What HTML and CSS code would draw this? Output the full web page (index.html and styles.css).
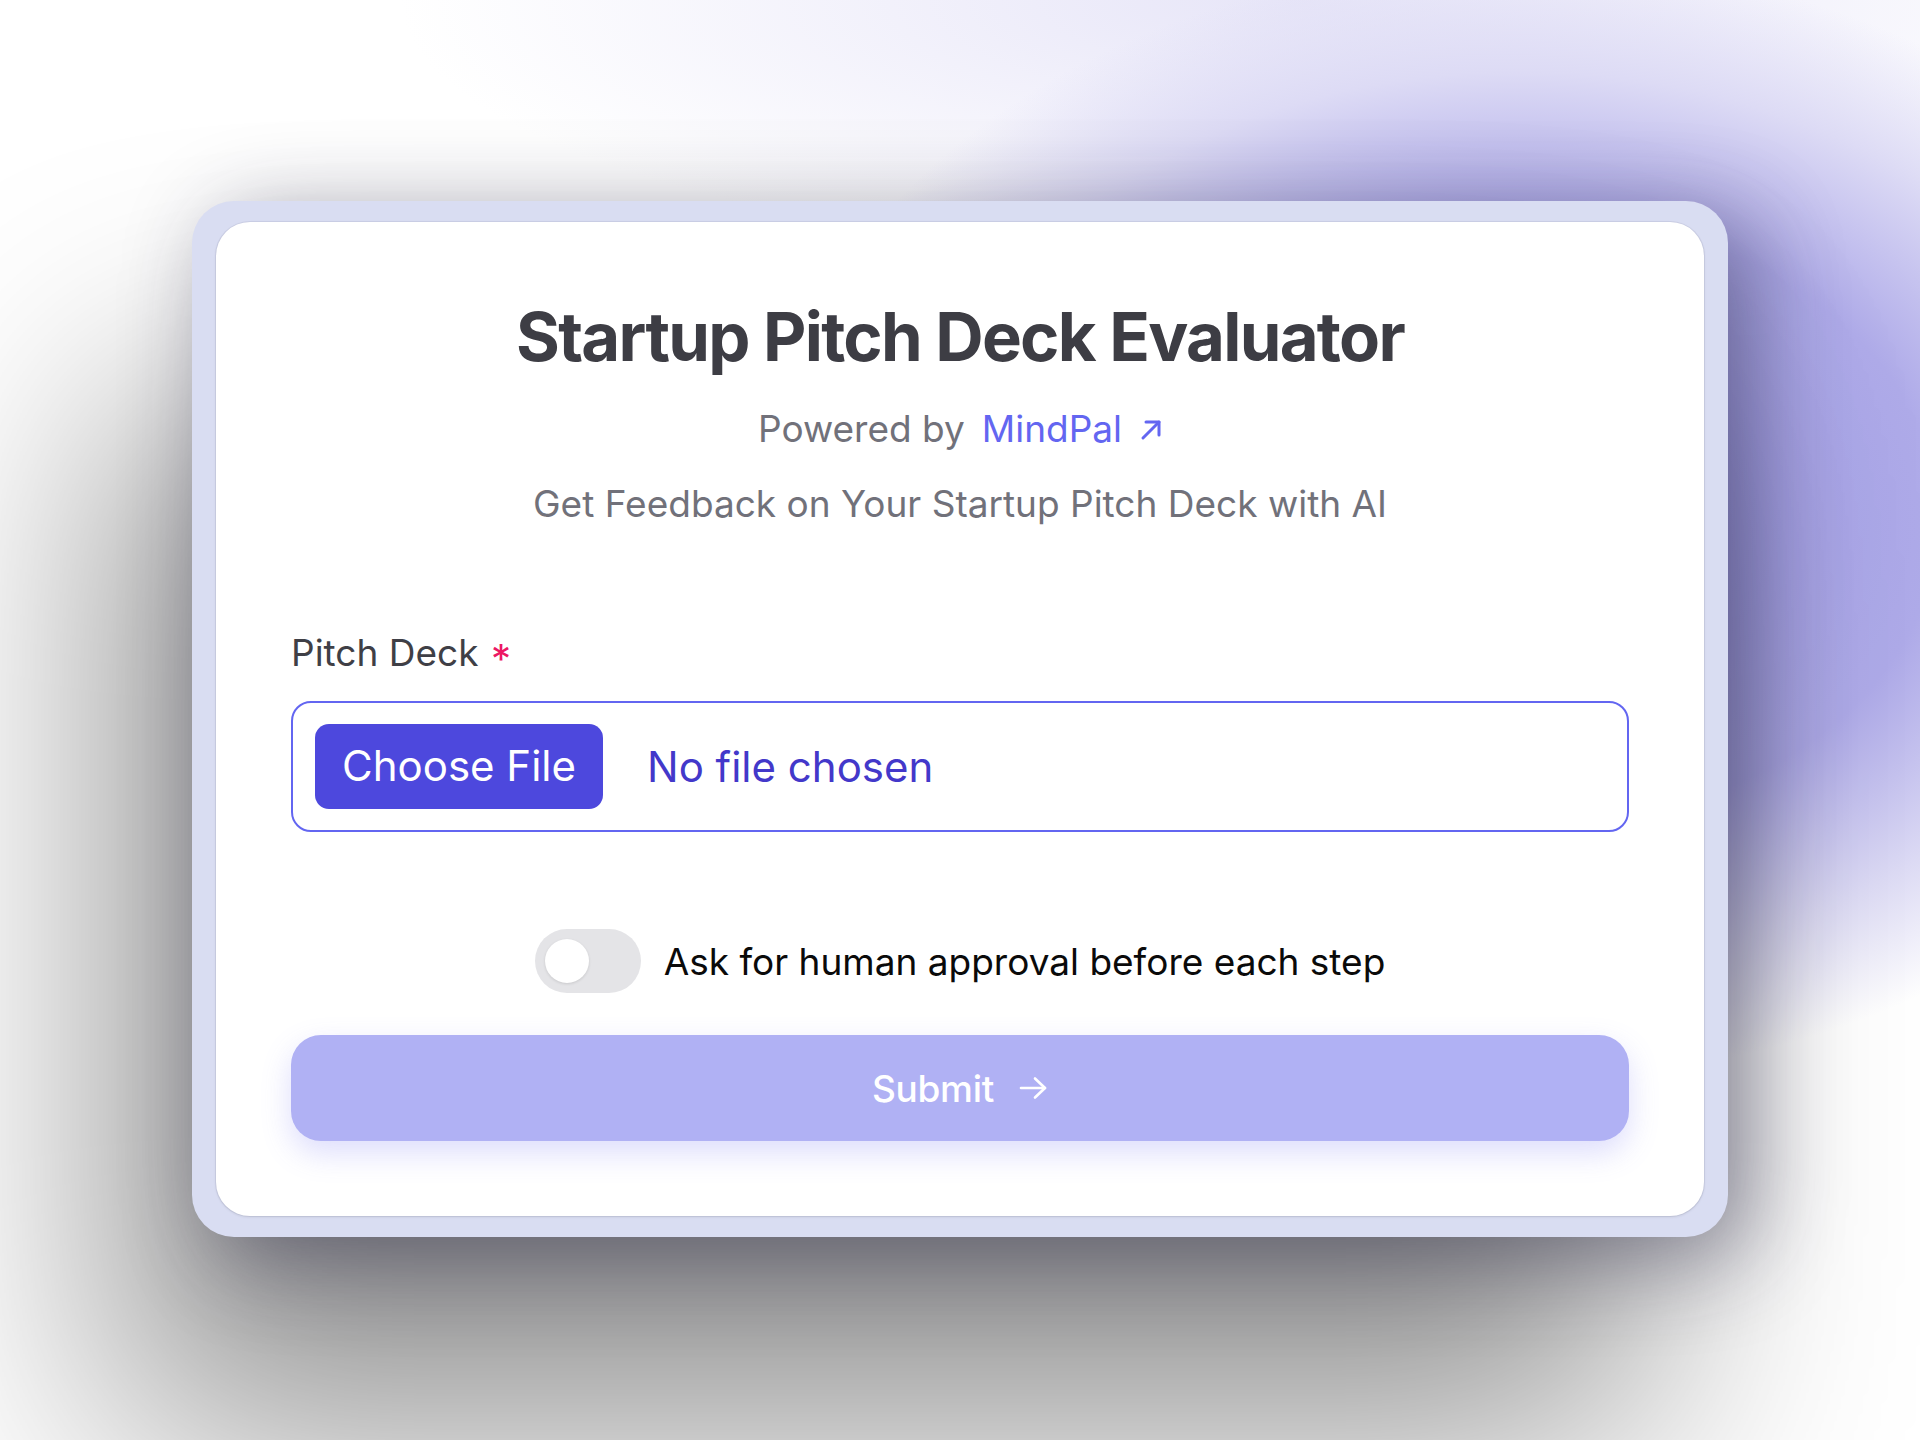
FILE: index.html
```html
<!DOCTYPE html>
<html lang="en">
<head>
<meta charset="utf-8">
<title>Startup Pitch Deck Evaluator</title>
<link rel="stylesheet" href="styles.css">
</head>
<body>
<main class="stage">
  <div class="frame">
    <section class="card">
      <header class="head">
        <h1 class="title">Startup Pitch Deck Evaluator</h1>
        <p class="powered">Powered by <a class="brand" href="#">MindPal<svg class="brand-icon" width="22" height="22" viewBox="0 0 22 22" fill="none" stroke="currentColor" stroke-width="3" stroke-linecap="round" stroke-linejoin="round"><path d="M3 19 19 3"/><path d="M6 3h13v13"/></svg></a></p>
        <p class="subtitle">Get Feedback on Your Startup Pitch Deck with AI</p>
      </header>
      <form class="form">
        <div class="field">
          <label class="label">Pitch Deck <span class="req">*</span></label>
          <div class="file">
            <span class="file-btn">Choose File</span>
            <span class="file-name">No file chosen</span>
          </div>
        </div>
        <div class="toggle-row">
          <span class="switch"><span class="knob"></span></span>
          <span class="toggle-label">Ask for human approval before each step</span>
        </div>
        <button class="submit" type="button">Submit<svg class="submit-icon" width="30" height="24" viewBox="0 0 30 24" fill="none" stroke="currentColor" stroke-width="2.6" stroke-linecap="round" stroke-linejoin="round"><path d="M3 12h24"/><path d="M17 2.5 27 12 17 21.5"/></svg></button>
      </form>
    </section>
  </div>
</main>
</body>
</html>
```
FILE: styles.css
```css
* { box-sizing: border-box; }

html, body {
  margin: 0;
  padding: 0;
}

body {
  width: 1920px;
  height: 1440px;
  overflow: hidden;
  font-family: Inter, "Noto Sans", "Liberation Sans", sans-serif;
  background:
    radial-gradient(ellipse 760px 560px at 1520px 520px, #9c98e6 0%, #afabe9 55%, #dddbf5 80%, rgba(255,255,255,0) 100%),
    radial-gradient(ellipse 900px 260px at 1300px 0px, rgba(225,223,246,0.8) 0%, rgba(255,255,255,0) 100%),
    #ffffff;
}

.stage {
  padding-top: 201px;
  display: flex;
  justify-content: center;
}

.frame {
  width: 1536px;
  padding: 21px 24px;
  background: #d9ddf2;
  border-radius: 42px;
  box-shadow:
    24px 20px 90px rgba(30, 28, 60, 0.45),
    -80px 200px 260px rgba(0, 0, 0, 0.43);
}

.card {
  background: #ffffff;
  border-radius: 34px;
  padding: 75px 75px;
  box-shadow: 0 0 0 1px rgba(40, 40, 80, 0.07), 0 1px 3px rgba(0, 0, 0, 0.1);
}

.head {
  display: flex;
  flex-direction: column;
  align-items: center;
  text-align: center;
}

.title {
  margin: 0;
  font-size: 67px;
  line-height: 80px;
  font-weight: 700;
  color: #3d3d44;
  letter-spacing: -1.7px;
}

.powered {
  margin: 29px 0 0;
  font-size: 37px;
  line-height: 46px;
  color: #71717a;
  display: flex;
  align-items: center;
}

.brand {
  margin-left: 17px;
  color: #6366f1;
  text-decoration: none;
  display: inline-flex;
  align-items: center;
}

.brand-icon {
  margin-left: 18px;
  margin-top: 2px;
}

.subtitle {
  margin: 29px 0 0;
  font-size: 37px;
  line-height: 45px;
  color: #71717a;
}

.form {
  display: flex;
  flex-direction: column;
}

.field {
  margin-top: 104px;
  display: flex;
  flex-direction: column;
}

.label {
  display: block;
  height: 45px;
  font-size: 37px;
  line-height: 45px;
  color: #3f3f46;
}

.req {
  display: inline-block;
  color: #ec1763;
  margin-left: 2px;
  font-size: 40px;
  line-height: 37px;
  vertical-align: top;
  transform: translateY(10px);
}

.file {
  margin-top: 26px;
  height: 131px;
  border: 2px solid #6366f1;
  border-radius: 20px;
  padding: 0 22px;
  display: flex;
  align-items: center;
  gap: 44px;
}

.file-btn {
  background: #4d48dd;
  color: #ffffff;
  font-size: 42px;
  line-height: 51px;
  padding: 16px 27px 18px;
  border-radius: 14px;
}

.file-name {
  font-size: 42px;
  line-height: 51px;
  color: #4338ca;
}

.toggle-row {
  margin-top: 97px;
  display: flex;
  justify-content: center;
  align-items: center;
  gap: 23px;
}

.switch {
  width: 106px;
  height: 64px;
  border-radius: 32px;
  background: #e4e4e7;
  padding: 10px;
  display: flex;
  align-items: center;
}

.knob {
  width: 44px;
  height: 44px;
  border-radius: 50%;
  background: #ffffff;
  box-shadow: 0 1px 3px rgba(0, 0, 0, 0.12);
}

.toggle-label {
  font-size: 37px;
  line-height: 45px;
  color: #0a0a0a;
}

.submit {
  margin-top: 42px;
  height: 106px;
  border: 0;
  border-radius: 30px;
  background: #b0b1f4;
  color: #ffffff;
  font-family: inherit;
  font-size: 37px;
  font-weight: 500;
  letter-spacing: -0.3px;
  display: flex;
  align-items: center;
  justify-content: center;
  gap: 24px;
  box-shadow: 0 12px 30px rgba(99, 102, 241, 0.22);
}
```
